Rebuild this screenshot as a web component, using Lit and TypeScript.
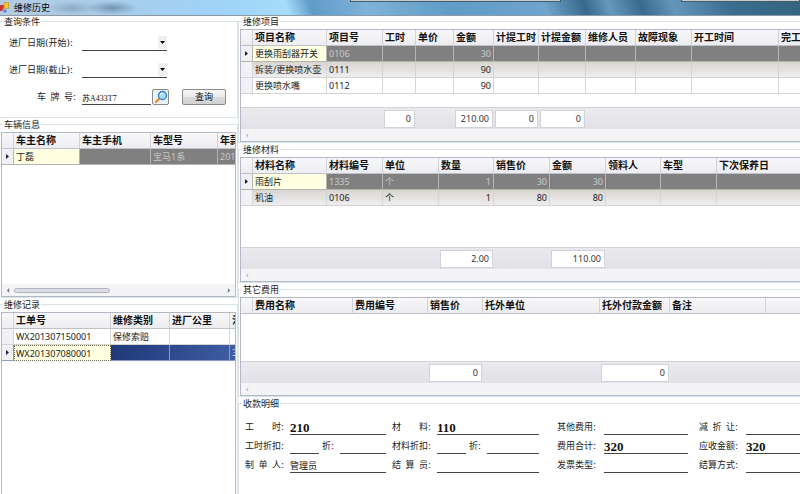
import { LitElement, html, css, svg, nothing } from "lit";
import { customElement, property } from "lit/decorators.js";
import { classMap } from "lit/directives/class-map.js";
import { styleMap } from "lit/directives/style-map.js";

interface Column {
  title: string;
  width?: number;
  numeric?: boolean;
  total?: string;
}

interface Row {
  cells: string[];
  state?: "selected" | "active" | "striped";
}

@customElement("data-grid")
class DataGrid extends LitElement {
  @property({ attribute: false }) columns: Column[] = [];
  @property({ attribute: false }) rows: Row[] = [];
  @property({ type: Number }) blank = 0;
  @property({ type: Boolean }) totals = false;
  @property() scroll: "none" | "idle" | "thumb" = "none";
  @property() label = "";

  static styles = css`
    :host {
      display: flex;
      flex-direction: column;
      border: 1px solid #b3b9c4;
      background: #fff;
      overflow: hidden;
      min-width: 0;
    }
    table {
      width: 100%;
      table-layout: fixed;
      border-collapse: separate;
      border-spacing: 0;
    }
    th,
    td {
      box-sizing: border-box;
      height: 16px;
      padding: 0 2px;
      border-right: 1px solid #d6d4cf;
      border-bottom: 1px solid #d6d4cf;
      overflow: hidden;
      white-space: nowrap;
      text-align: left;
      font-size: 9px;
      line-height: 15px;
      font-weight: 400;
    }
    th:last-child,
    td:last-child {
      border-right: 0;
    }
    thead th {
      font-size: 10px;
      font-weight: 700;
      color: #111;
      background: linear-gradient(#f8f8fa, #ededf1);
      border-right-color: #cfd2da;
      border-bottom-color: #bfc2c8;
    }
    .mark {
      padding: 0;
      background: #f1f1f5;
      border-color: #d3d5de;
      text-align: center;
    }
    .mark svg {
      display: block;
      margin: 0 auto;
    }
    .num {
      text-align: right;
    }
    .striped {
      background: linear-gradient(#d9d6d1, #efeef1);
    }
    .selected {
      background: #808080;
      color: #c9c9c9;
    }
    .selected td {
      border-color: #b4b4b0;
    }
    .active {
      background: linear-gradient(90deg, #1b3474 40%, #3f5da3);
      color: #c5d3f2;
    }
    .active td {
      border-color: #8b9cc4;
    }
    td.focus {
      background: #ffffe1;
      color: #222;
    }
    .active td.focus {
      border: 1px dotted #6c6c50;
      line-height: 13px;
      padding: 0 1px;
    }
    .blank td {
      border: 0;
      padding: 0;
    }
    tfoot td {
      height: 22px;
      border: 0;
      border-top: 1px solid #d0d2d9;
      padding: 0 1px;
      background: linear-gradient(#eaeaee, #e1e1e7);
    }
    output {
      display: block;
      box-sizing: border-box;
      height: 18px;
      padding: 0 3px;
      border: 1px solid #d0d2da;
      background: #fff;
      line-height: 16px;
      text-align: right;
      color: #333;
    }
    .bar {
      display: flex;
      align-items: center;
      gap: 4px;
      height: 12px;
      padding: 0 4px;
      margin-top: auto;
      background: #f4f4f7;
      color: #777c8c;
    }
    .bar.idle {
      color: #c6c8d0;
    }
    .track {
      flex: 1;
    }
    .thumb {
      box-sizing: border-box;
      width: 46%;
      height: 5px;
      border: 1px solid #b2b5bf;
      border-radius: 3px;
      background: #dcdde3;
    }
  `;

  private arrow(path: string) {
    return html`<svg width="4" height="5" viewBox="0 0 5 6" aria-hidden="true">
      ${svg`<path d=${path} fill="currentColor" />`}
    </svg>`;
  }

  render() {
    return html`
      <table aria-label=${this.label}>
        <colgroup>
          <col style=${styleMap({ width: "12px" })} />
          ${this.columns.map(
            (c) => html`<col style=${styleMap(c.width ? { width: `${c.width}px` } : {})} />`,
          )}
        </colgroup>
        <thead>
          <tr>
            <th></th>
            ${this.columns.map((c) => html`<th scope="col">${c.title}</th>`)}
          </tr>
        </thead>
        <tbody>
          ${this.rows.map((r) => {
            const current = r.state === "selected" || r.state === "active";
            return html`<tr class=${r.state ?? ""}>
              <td class="mark">
                ${current
                  ? html`<svg width="3" height="5" viewBox="0 0 3 5" aria-hidden="true">
                      <path d="M0 0L3 2.500L0 5Z" fill="#1c2340" />
                    </svg>`
                  : nothing}
              </td>
              ${this.columns.map(
                (c, i) => html`<td
                  class=${classMap({ num: !!c.numeric, focus: current && i === 0 })}
                >${r.cells[i] ?? ""}</td>`,
              )}
            </tr>`;
          })}
          ${this.blank
            ? html`<tr class="blank">
                <td
                  colspan=${this.columns.length + 1}
                  style=${styleMap({ height: `${this.blank}px` })}
                ></td>
              </tr>`
            : nothing}
        </tbody>
        ${this.totals
          ? html`<tfoot>
              <tr>
                <td></td>
                ${this.columns.map(
                  (c) => html`<td>${c.total ? html`<output>${c.total}</output>` : nothing}</td>`,
                )}
              </tr>
            </tfoot>`
          : nothing}
      </table>
      ${this.scroll === "none"
        ? nothing
        : html`<div class=${classMap({ bar: true, idle: this.scroll === "idle" })}>
            ${this.arrow("M4 0L1 3L4 6Z")}
            <div class="track">
              ${this.scroll === "thumb" ? html`<div class="thumb"></div>` : nothing}
            </div>
            ${this.scroll === "thumb" ? this.arrow("M1 0L4 3L1 6Z") : nothing}
          </div>`}
    `;
  }
}

const vehicleColumns: Column[] = [
  { title: "车主名称", width: 66 },
  { title: "车主手机", width: 71 },
  { title: "车型号", width: 67 },
  { title: "年款" },
];
const vehicleRows: Row[] = [{ cells: ["丁磊", "", "宝马1系", "201"], state: "selected" }];

const recordColumns: Column[] = [
  { title: "工单号", width: 97 },
  { title: "维修类别", width: 59 },
  { title: "进厂公里", width: 60 },
  { title: "油" },
];
const recordRows: Row[] = [
  { cells: ["WX201307150001", "保修索赔"] },
  { cells: ["WX201307080001", "", "", "3"], state: "active" },
];

const itemColumns: Column[] = [
  { title: "项目名称", width: 74 },
  { title: "项目号", width: 56 },
  { title: "工时", width: 33, numeric: true, total: "0" },
  { title: "单价", width: 38, numeric: true },
  { title: "金额", width: 40, numeric: true, total: "210.00" },
  { title: "计提工时", width: 45, numeric: true, total: "0" },
  { title: "计提金额", width: 47, numeric: true, total: "0" },
  { title: "维修人员", width: 50 },
  { title: "故障现象", width: 56 },
  { title: "开工时间", width: 87 },
  { title: "完工" },
];
const itemRows: Row[] = [
  { cells: ["更换雨刮器开关", "0106", "", "", "30"], state: "selected" },
  { cells: ["拆装/更换喷水壶", "0111", "", "", "90"], state: "striped" },
  { cells: ["更换喷水嘴", "0112", "", "", "90"] },
];

const partColumns: Column[] = [
  { title: "材料名称", width: 74 },
  { title: "材料编号", width: 56 },
  { title: "单位", width: 56 },
  { title: "数量", width: 55, numeric: true, total: "2.00" },
  { title: "销售价", width: 56, numeric: true },
  { title: "金额", width: 56, numeric: true, total: "110.00" },
  { title: "领料人", width: 55 },
  { title: "车型", width: 56 },
  { title: "下次保养日" },
];
const partRows: Row[] = [
  { cells: ["雨刮片", "1335", "个", "1", "30", "30"], state: "selected" },
  { cells: ["机油", "0106", "个", "1", "80", "80"], state: "striped" },
];

const feeColumns: Column[] = [
  { title: "费用名称", width: 100 },
  { title: "费用编号", width: 75 },
  { title: "销售价", width: 55, total: "0" },
  { title: "托外单位", width: 117 },
  { title: "托外付款金额", width: 70, total: "0" },
  { title: "备注", width: 96 },
  { title: "" },
];

@customElement("app-root")
class AppRoot extends LitElement {
  static styles = css`
    :host {
      display: flex;
      flex-direction: column;
      min-height: 100vh;
      background: #fff;
      color: #222;
      font-family: "Noto Sans", "Noto Sans CJK SC", sans-serif;
      font-size: 9px;
      line-height: 11px;
    }
    .title {
      display: flex;
      align-items: center;
      gap: 4px;
      box-sizing: border-box;
      height: 16px;
      border-bottom: 1px solid #8d9aa6;
      background:
        radial-gradient(ellipse 26px 7px at 72px 8px, #7895b199, transparent),
        radial-gradient(ellipse 26px 7px at 112px 8px, #5c7b9bb0, transparent),
        linear-gradient(
          70deg,
          #b3cbe0 0%,
          #a9cdea 14%,
          #9fd2f6 26%,
          #a5dbfb 36%,
          #5f9bc8 39%,
          #7fb2d8 46%,
          #5f9cc6 56%,
          #6ea4cd 68%,
          #38698c 73%,
          #6498bd 76%,
          #3a6a8d 80%,
          #6396bb 84%,
          #3c6d8f 91%,
          #34647f 100%
        );
    }
    h1 {
      margin: 0;
      font-size: 9px;
      font-weight: 400;
      line-height: 11px;
      color: #000;
    }
    .tabs {
      display: grid;
      grid-template-columns: 211fr 120fr 119fr;
      flex: 1;
      align-self: flex-start;
      margin-left: 296px;
    }
    .tab {
      height: 1px;
      background: #c2cdd1;
      border: solid #4a5b66;
      border-width: 0 1px 1px;
    }
    .tab:last-child {
      grid-column: 3;
    }
    .body {
      flex: 1;
      display: grid;
      grid-template-columns: 238px minmax(0, 1fr);
    }
    .column {
      display: flex;
      flex-direction: column;
      gap: 1px;
      min-width: 0;
    }
    fieldset {
      display: flex;
      flex-direction: column;
      box-sizing: border-box;
      min-width: 0;
      margin: 0;
      padding: 2px 1px 0;
      border: 1px solid #d9e3ea;
    }
    .left fieldset {
      border-left: 0;
    }
    .right fieldset {
      border-right: 0;
      padding-right: 0;
    }
    .right data-grid {
      border-right: 0;
    }
    fieldset.fill {
      flex: 1;
      border-bottom: 0;
    }
    .fill data-grid {
      flex: 1;
      border-bottom: 0;
    }
    legend {
      margin-left: 2px;
      padding: 0 1px;
      line-height: 11px;
    }
    input,
    select {
      box-sizing: border-box;
      min-width: 0;
      width: 100%;
      height: 14px;
      margin: 0;
      padding: 0;
      border: 0;
      border-bottom: 1px solid #444;
      border-radius: 0;
      background: none;
      outline: 0;
      appearance: none;
      color: #111;
      font: 9px "Noto Sans", "Noto Sans CJK SC", sans-serif;
    }
    label {
      font-family: "DejaVu Sans", "Noto Sans CJK SC", sans-serif;
      white-space: nowrap;
    }
    .spread {
      display: flex;
      justify-content: space-between;
      width: 39px;
    }
    .query {
      display: grid;
      grid-template-columns: 67px 1fr;
      column-gap: 6px;
      row-gap: 11px;
      align-items: center;
      padding: 6px 10px 12px 8px;
    }
    .query .spread {
      justify-self: end;
    }
    .date {
      display: grid;
      width: 85px;
      align-items: center;
    }
    .date > * {
      grid-area: 1 / 1;
    }
    .date select {
      height: 16px;
    }
    .drop {
      justify-self: end;
      pointer-events: none;
    }
    .plate {
      display: flex;
      align-items: flex-end;
    }
    .plate input {
      width: 69px;
      margin-right: 1px;
      font: 8px "Liberation Serif", "Noto Sans CJK SC", serif;
    }
    button {
      box-sizing: border-box;
      height: 16px;
      margin: 0;
      padding: 0;
      border: 1px solid #8a8a8a;
      border-radius: 2px;
      background: linear-gradient(#f6f6f6, #ebebeb 50%, #dcdcdc 50%, #d2d2d2);
      color: #111;
      font: 9px / 14px "Noto Sans", "Noto Sans CJK SC", sans-serif;
    }
    .find {
      width: 17px;
      margin-right: 13px;
      background: #eef3f8;
    }
    .find svg {
      display: block;
      margin: 0 auto;
    }
    .search {
      width: 44px;
    }
    .settle {
      display: grid;
      grid-template-columns: 147fr 165fr 142fr 101fr;
      grid-auto-rows: 18px;
      row-gap: 1px;
      padding: 6px 0 0 5px;
    }
    .field {
      display: flex;
      align-items: flex-end;
      gap: 6px;
      min-width: 0;
      padding-right: 6px;
    }
    .field:nth-child(4n + 2) {
      padding-right: 18px;
    }
    .field:nth-child(4n + 3) {
      padding-right: 11px;
    }
    .field:nth-child(4n) {
      padding-right: 0;
    }
    .field label {
      flex: none;
      padding-bottom: 2px;
    }
    .field:nth-child(4n + 3) input,
    .field:nth-child(4n) input {
      margin-left: 2px;
    }
    .field .rate {
      flex: none;
      width: 29px;
    }
    .field .after {
      margin-left: -3px;
    }
    input.sum {
      font: bold 13px "Liberation Serif", "Noto Sans CJK SC", serif;
    }
  `;

  private spread(id: string, label: string) {
    return html`<label class="spread" for=${id}
      >${label.split(" ").map((part) => html`<span>${part}</span>`)}</label
    >`;
  }

  private field(id: string, label: string, value = "", sum = false) {
    return html`<div class="field">
      ${this.spread(id, label)}
      <input id=${id} class=${sum ? "sum" : ""} .value=${value} />
    </div>`;
  }

  private discount(id: string, label: string) {
    return html`<div class="field">
      ${this.spread(id, label)}
      <input id=${id} class="rate" />
      <label class="after" for=${`${id}-off`}>折:</label>
      <input id=${`${id}-off`} />
    </div>`;
  }

  private date(id: string) {
    return html`<div class="date">
      <select id=${id}><option></option></select>
      <svg class="drop" width="9" height="14" viewBox="0 0 9 14" aria-hidden="true">
        <path d="M0 0H9V13H0Z" fill="#f0f0f0" />
        <path d="M2 5H7L4.500 8Z" fill="#000" />
      </svg>
    </div>`;
  }

  render() {
    return html`
      <header class="title">
        <svg width="10" height="13" viewBox="0 0 10 13" aria-hidden="true">
          <path d="M0 4H4V10H0Z" fill="#c9362b" />
          <path d="M4 1.500H8.500V7.500H4Z" fill="#f8c83c" stroke="#c08a1c" stroke-width=".7" />
          <path d="M3 8H7V12H3Z" fill="#4f86e0" stroke="#e8f0ff" stroke-width=".6" />
        </svg>
        <h1>维修历史</h1>
        <div class="tabs"><div class="tab"></div><div class="tab"></div></div>
      </header>
      <main class="body">
        <div class="column left">
          <fieldset>
            <legend>查询条件</legend>
            <div class="query">
              <label for="from">进厂日期(开始):</label>
              ${this.date("from")}
              <label for="to">进厂日期(截止):</label>
              ${this.date("to")}
              ${this.spread("plate", "车 牌 号:")}
              <div class="plate">
                <input id="plate" .value=${"苏A433T7"} />
                <button class="find" type="button" aria-label="查找车牌">
                  <svg width="14" height="14" viewBox="0 0 14 14" aria-hidden="true">
                    <path d="M2 12L5.500 8.500" stroke="#e0912c" stroke-width="2.400" stroke-linecap="round" />
                    <circle cx="8.500" cy="5.500" r="4" fill="#a9dcfa" stroke="#2f7fd0" stroke-width="1.300" />
                    <path d="M6.300 5A2.400 2.400 0 0 1 8.800 3" fill="none" stroke="#fff" stroke-width="1.200" />
                  </svg>
                </button>
                <button class="search" type="button">查询</button>
              </div>
            </div>
          </fieldset>
          <fieldset>
            <legend>车辆信息</legend>
            <data-grid
              label="车辆信息"
              .columns=${vehicleColumns}
              .rows=${vehicleRows}
              .blank=${119}
              scroll="thumb"
            ></data-grid>
          </fieldset>
          <fieldset class="fill">
            <legend>维修记录</legend>
            <data-grid label="维修记录" .columns=${recordColumns} .rows=${recordRows}></data-grid>
          </fieldset>
        </div>
        <div class="column right">
          <fieldset>
            <legend>维修项目</legend>
            <data-grid
              label="维修项目"
              .columns=${itemColumns}
              .rows=${itemRows}
              .blank=${13}
              totals
              scroll="idle"
            ></data-grid>
          </fieldset>
          <fieldset>
            <legend>维修材料</legend>
            <data-grid
              label="维修材料"
              .columns=${partColumns}
              .rows=${partRows}
              .blank=${41}
              totals
              scroll="idle"
            ></data-grid>
          </fieldset>
          <fieldset>
            <legend>其它费用</legend>
            <data-grid
              label="其它费用"
              .columns=${feeColumns}
              .blank=${47}
              totals
              scroll="idle"
            ></data-grid>
          </fieldset>
          <fieldset class="fill">
            <legend>收款明细</legend>
            <div class="settle">
              ${this.field("hours", "工 时:", "210", true)}
              ${this.field("parts", "材 料:", "110", true)}
              ${this.field("other", "其他费用:")}
              ${this.field("allow", "减 折 让:")}
              ${this.discount("hours-rate", "工时折扣:")}
              ${this.discount("parts-rate", "材料折扣:")}
              ${this.field("total", "费用合计:", "320", true)}
              ${this.field("due", "应收金额:", "320", true)}
              ${this.field("maker", "制 单 人:", "管理员")}
              ${this.field("cashier", "结 算 员:")}
              ${this.field("invoice", "发票类型:")}
              ${this.field("method", "结算方式:")}
            </div>
          </fieldset>
        </div>
      </main>
    `;
  }
}
